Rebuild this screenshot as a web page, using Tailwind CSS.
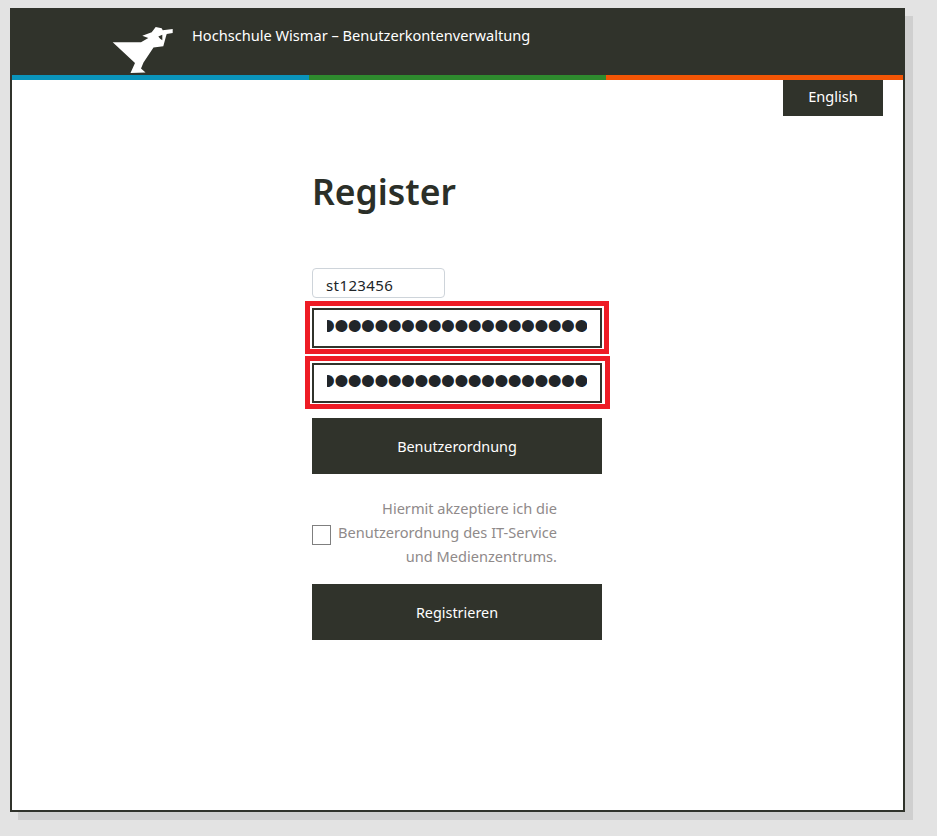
<!DOCTYPE html>
<html lang="en">

<head>
    <meta charset="UTF-8">
    <meta name="viewport" content="width=device-width, initial-scale=1">
    <title>Benutzerkontenverwaltung</title>
    <script src="https://cdn.jsdelivr.net/npm/@tailwindcss/browser@4"></script>
</head>

<body class="h-[836px] overflow-hidden bg-[#e3e3e3] pl-[10px] pt-[8px] font-['Noto_Sans',sans-serif]">
    <div class="flex h-[804px] w-[895px] flex-col border-2 border-[#30332b] bg-white shadow-[8px_8px_0_#cfcfcf]">
        <!-- header -->
        <header class="flex h-[65px] items-start bg-[#30332b]">
            <svg class="ml-[100px] mt-[16px] h-[49px] w-[62px]" viewBox="112 25 62 49" fill="#fff">
                <path d="M112.700 41.200 L141 41.200 L148.300 37 L142.300 34.700 L151.700 31.300 L155.700 26 L161.700 27.300 L162.700 29.300 L172.700 28 L172.700 32 L166.700 33 L166 35.300 L163.300 45.300 L153.500 46.500 L143.500 61.500 L141 67.500 L145.500 71.500 L130.500 72 L135 62 Z"/>
                <path d="M158.300 35.500 L162.300 33.700 L162.300 39.300 L160 37.500 Z" fill="#30332b"/>
            </svg>
            <p class="ml-[18px] mt-[15px] text-[14.6px] leading-5 text-white">Hochschule Wismar – Benutzerkontenverwaltung</p>
        </header>
        <div class="grid h-[5px] grid-cols-3">
            <div class="bg-[#0a94bb]"></div>
            <div class="bg-[#2e8b2e]"></div>
            <div class="bg-[#f35505]"></div>
        </div>

        <div class="flex justify-end pr-5">
            <button class="h-[36px] w-[100px] bg-[#30332b] pb-[3px] text-[14.6px] text-white">English</button>
        </div>

        <!-- form -->
        <main class="ml-[300px] w-[290px]">
            <h1 class="mt-[55px] mb-[57px] text-[35.500px] leading-10 font-semibold text-[#2b2f28]">Register</h1>

            <input type="text" value="st123456"
                class="block h-[30px] w-[133px] rounded border border-[#ced4da] px-[13px] pt-[3px] text-[15px] tracking-[0.4px] text-[#212529]">

            <div class="relative mt-[10px]">
                <div class="absolute -left-[7px] -top-[7px] h-[53px] w-[304px] border-[5px] border-[#ee1c25]"></div>
                <input type="password" dir="rtl" value="passwordpasswordpasswordpassword"
                    class="block h-[40px] w-full border-2 border-[#30332b] pb-[5px] pl-[13px] pr-[13px] font-['Liberation_Sans',sans-serif] text-[44px] tracking-[-2.070px] text-[#212529]">
            </div>
            <div class="relative mt-[15px]">
                <div class="absolute -left-[7px] -top-[7px] h-[53px] w-[305px] border-[5px] border-[#ee1c25]"></div>
                <input type="password" dir="rtl" value="passwordpasswordpasswordpassword"
                    class="block h-[40px] w-full border-2 border-[#30332b] pb-[5px] pl-[13px] pr-[13px] font-['Liberation_Sans',sans-serif] text-[44px] tracking-[-2.070px] text-[#212529]">
            </div>

            <button class="mt-[15px] block h-[56px] w-full bg-[#30332b] pt-[2px] text-[14.4px] text-white">Benutzerordnung</button>

            <label class="mt-[23px] flex h-[72px] w-[245px] items-center justify-between">
                <input type="checkbox" class="mt-[3px] h-[20px] w-[19px] appearance-none border border-[#7f7f7f] bg-white">
                <span class="mb-[2px] text-right text-[14.6px] leading-6 text-[#8f8a8a]">Hiermit akzeptiere ich die<br>Benutzerordnung des IT-Service<br>und Medienzentrums.</span>
            </label>

            <button class="mt-[15px] block h-[56px] w-full bg-[#30332b] pt-[2px] text-[14.4px] text-white">Registrieren</button>
        </main>
    </div>
</body>

</html>
